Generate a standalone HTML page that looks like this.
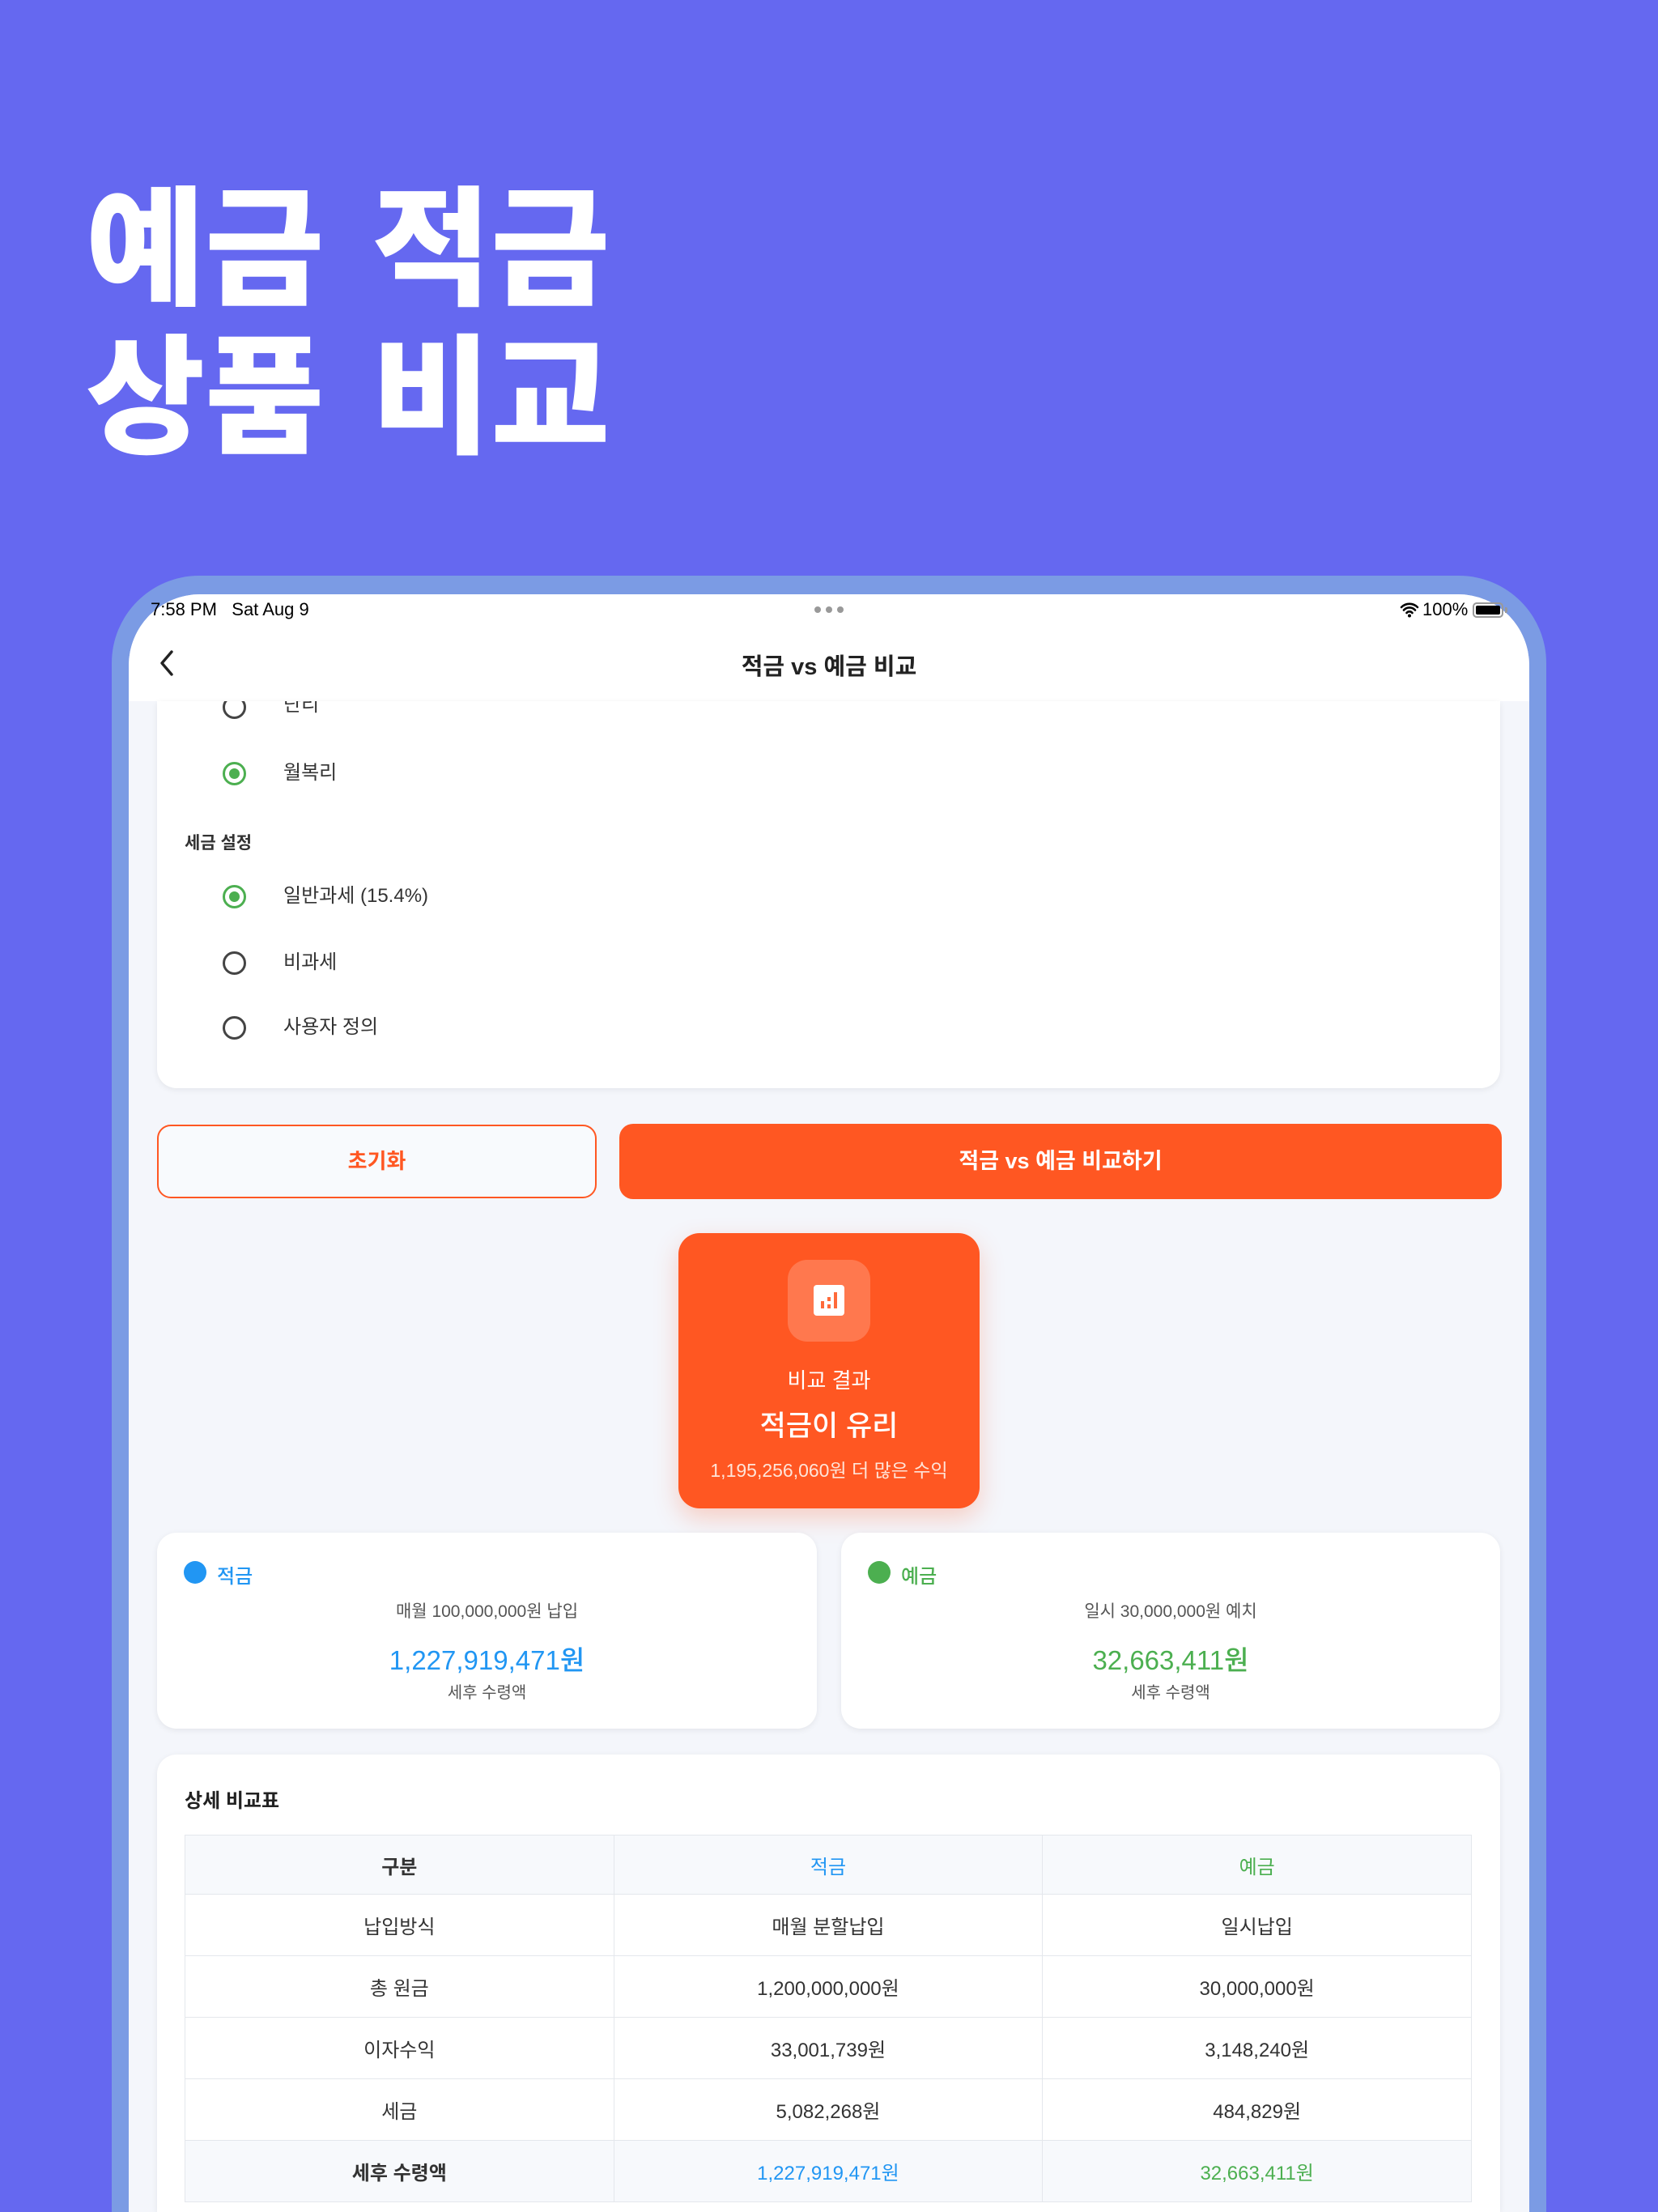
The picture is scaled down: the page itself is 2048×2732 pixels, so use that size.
<!DOCTYPE html>
<html><head><meta charset="utf-8"><style>
*{margin:0;padding:0;box-sizing:border-box}
html,body{width:2048px;height:2732px;overflow:hidden}
body{background:#6568f0;font-family:"Liberation Sans","Noto Sans CJK KR",sans-serif;color:#222}
#w{position:relative;width:2048px;height:2732px;overflow:hidden;background:#6568f0}
.a{position:absolute}
.h{left:106px;color:#fff;font-weight:900;font-size:160px;line-height:1;letter-spacing:0px;word-spacing:22px;font-family:"Noto Sans CJK KR",sans-serif;white-space:nowrap}
.frame{left:138px;top:711px;width:1772px;height:2021px;background:#7b9be4;border-radius:108px 108px 0 0}
.screen{left:159px;top:734px;width:1730px;height:1998px;background:#f4f6fb;border-radius:88px 88px 0 0;overflow:hidden}
.card{background:#fff;border-radius:24px;box-shadow:0 2px 8px rgba(0,0,0,.07)}
.rad{width:29px;height:29px;border-radius:50%;border:3px solid #444}
.rad.on{border-color:#4caf50}
.rad.on::after{content:"";position:absolute;left:5px;top:5px;width:13px;height:13px;border-radius:50%;background:#4caf50}
.lbl{font-size:24px;color:#333;line-height:30px}
.c{text-align:center}
table{border-collapse:collapse;position:absolute;left:228px;top:2266px;width:1590px;font-size:24px;color:#333}
td{border:1.5px solid #e4e7ec;text-align:center;height:76px;width:530px}
tr:first-child td{height:73px;background:#f7f9fc;font-weight:bold}
tr:last-child td{background:#f7f9fc;font-weight:bold}
</style></head><body><div id="w">
<div class="a h" style="top:215px">예금 적금</div>
<div class="a h" style="top:398px">상품 비교</div>
<div class="a frame"></div>
<div class="a screen"></div>
<div class="a" style="left:159px;top:734px;width:1730px;height:132px;background:#fff;border-radius:88px 88px 0 0"></div>
<div class="a" style="left:186px;top:740px;font-size:22px;color:#000">7:58 PM&nbsp;&nbsp;&nbsp;Sat Aug 9</div>
<div class="a" style="left:1006px;top:749px;width:36px;height:8px;display:flex;justify-content:space-between"><i style="width:8px;height:8px;border-radius:50%;background:#999"></i><i style="width:8px;height:8px;border-radius:50%;background:#999"></i><i style="width:8px;height:8px;border-radius:50%;background:#999"></i></div>
<svg class="a" style="left:1729px;top:743px" width="24" height="20" viewBox="0 0 24 20"><path d="M2 7a14 14 0 0 1 20 0M5 10.5a9.5 9.5 0 0 1 14 0M8.5 14a4.5 4.5 0 0 1 7 0" stroke="#000" stroke-width="2.6" fill="none" stroke-linecap="round"/><circle cx="12" cy="17.5" r="2" fill="#000"/></svg>
<div class="a" style="left:1757px;top:740px;font-size:22px;color:#000">100%</div>
<div class="a" style="left:1819px;top:744px;width:38px;height:19px;border:2px solid #999;border-radius:5px;padding:2px"><div style="width:100%;height:100%;background:#000;border-radius:2px"></div></div>
<div class="a" style="left:1859px;top:750px;width:3px;height:7px;background:#999;border-radius:0 2px 2px 0"></div>
<svg class="a" style="left:196px;top:802px" width="20" height="34" viewBox="0 0 20 34"><path d="M16 3L4 17l12 14" stroke="#222" stroke-width="3.4" fill="none" stroke-linecap="round" stroke-linejoin="round"/></svg>
<div class="a c" style="left:159px;width:1730px;top:800px;font-size:29px;font-weight:bold;color:#222">적금 vs 예금 비교</div>
<div class="a card" style="left:194px;top:866px;width:1659px;height:478px;border-radius:0 0 24px 24px"></div>
<div class="a rad" style="left:275px;top:859px;clip-path:inset(7px 0 0 0)"></div>
<div class="a lbl" style="left:350px;top:856px;clip-path:inset(10px 0 0 0)">단리</div>
<div class="a rad on" style="left:275px;top:941px"></div><div class="a lbl" style="left:350px;top:940px">월복리</div>
<div class="a" style="left:228px;top:1025px;font-size:21px;font-weight:bold;color:#333">세금 설정</div>
<div class="a rad on" style="left:275px;top:1093px"></div><div class="a lbl" style="left:350px;top:1092px">일반과세 (15.4%)</div>
<div class="a rad" style="left:275px;top:1175px"></div><div class="a lbl" style="left:350px;top:1174px">비과세</div>
<div class="a rad" style="left:275px;top:1255px"></div><div class="a lbl" style="left:350px;top:1254px">사용자 정의</div>
<div class="a c" style="left:194px;top:1389px;width:543px;height:91px;border:2px solid #ff5722;border-radius:17px;background:#f8fafd;color:#ff5722;font-size:26px;font-weight:bold;line-height:87px">초기화</div>
<div class="a c" style="left:765px;top:1388px;width:1090px;height:93px;background:#ff5722;border-radius:17px;color:#fff;font-size:27px;font-weight:bold;line-height:93px">적금 vs 예금 비교하기</div>
<div class="a" style="left:838px;top:1523px;width:372px;height:340px;background:#ff5722;border-radius:26px;box-shadow:0 12px 30px rgba(255,87,34,.25)"></div>
<div class="a" style="left:973px;top:1556px;width:102px;height:101px;background:rgba(255,255,255,.2);border-radius:24px"></div>
<svg class="a" style="left:1005px;top:1587px" width="38" height="38" viewBox="0 0 38 38"><rect width="38" height="38" rx="4" fill="#fff"/><rect x="9" y="20" width="4" height="9" fill="#ff6a3a"/><rect x="17" y="24" width="4" height="5" fill="#ff6a3a"/><rect x="17" y="15" width="4" height="5" fill="#ff6a3a"/><rect x="25" y="9" width="4" height="20" fill="#ff6a3a"/></svg>
<div class="a c" style="left:838px;width:372px;top:1685px;font-size:26px;color:#fff">비교 결과</div>
<div class="a c" style="left:838px;width:372px;top:1733px;font-size:35px;color:#fff;font-weight:500">적금이 유리</div>
<div class="a c" style="left:838px;width:372px;top:1797px;font-size:23px;color:#ffe4d8">1,195,256,060원 더 많은 수익</div>
<div class="a card" style="left:194px;top:1893px;width:815px;height:242px"></div>
<div class="a card" style="left:1039px;top:1893px;width:814px;height:242px"></div>
<div class="a" style="left:227px;top:1928px;width:28px;height:28px;border-radius:50%;background:#2196f3"></div>
<div class="a" style="left:268px;top:1927px;font-size:24px;color:#2196f3;font-weight:500">적금</div>
<div class="a" style="left:1072px;top:1928px;width:28px;height:28px;border-radius:50%;background:#4caf50"></div>
<div class="a" style="left:1113px;top:1927px;font-size:24px;color:#4caf50;font-weight:500">예금</div>
<div class="a c" style="left:194px;width:815px;top:1974px;font-size:21px;color:#555">매월 100,000,000원 납입</div>
<div class="a c" style="left:1039px;width:814px;top:1974px;font-size:21px;color:#555">일시 30,000,000원 예치</div>
<div class="a c" style="left:194px;width:815px;top:2024px;font-size:33px;color:#2196f3;font-weight:500">1,227,919,471원</div>
<div class="a c" style="left:1039px;width:814px;top:2024px;font-size:33px;color:#4caf50;font-weight:500">32,663,411원</div>
<div class="a c" style="left:194px;width:815px;top:2074px;font-size:20px;color:#555">세후 수령액</div>
<div class="a c" style="left:1039px;width:814px;top:2074px;font-size:20px;color:#555">세후 수령액</div>
<div class="a card" style="left:194px;top:2167px;width:1659px;height:565px;border-radius:24px 24px 0 0"></div>
<div class="a" style="left:228px;top:2204px;font-size:24px;font-weight:bold;color:#222">상세 비교표</div>
<table>
<tr><td>구분</td><td style="color:#2196f3;font-weight:normal">적금</td><td style="color:#4caf50;font-weight:normal">예금</td></tr>
<tr><td>납입방식</td><td>매월 분할납입</td><td>일시납입</td></tr>
<tr><td>총 원금</td><td>1,200,000,000원</td><td>30,000,000원</td></tr>
<tr><td>이자수익</td><td>33,001,739원</td><td>3,148,240원</td></tr>
<tr><td>세금</td><td>5,082,268원</td><td>484,829원</td></tr>
<tr><td>세후 수령액</td><td style="color:#2196f3;font-weight:normal">1,227,919,471원</td><td style="color:#4caf50;font-weight:normal">32,663,411원</td></tr>
</table>
</div></body></html>
